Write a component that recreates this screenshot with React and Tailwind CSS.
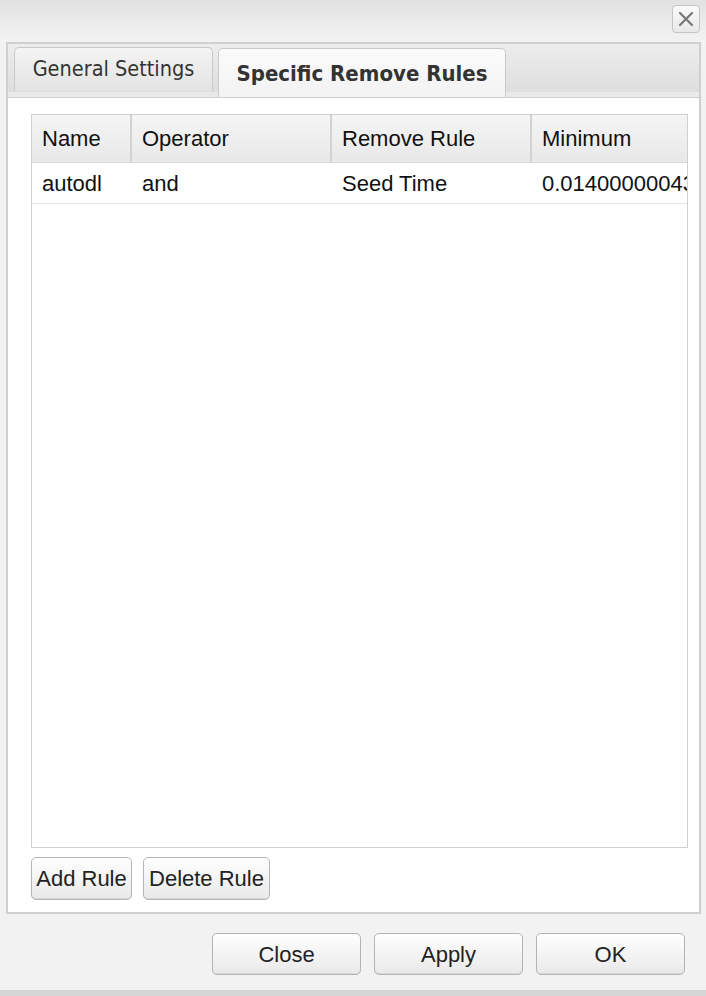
import React from "react";

const tabFont = { fontFamily: '"DejaVu Sans Condensed", "DejaVu Sans", sans-serif' };

function Btn({ children, className = "" }) {
  return (
    <div
      className={
        "flex items-center justify-center rounded-[5px] border border-[#b4b4b4] bg-gradient-to-b from-[#ffffff] to-[#e9e9e9] text-[#222] shadow-[inset_0_-1px_0_#d6d6d6] " +
        className
      }
    >
      {children}
    </div>
  );
}

export default function App() {
  const cols = [
    { label: "Name", w: "w-[98px]", v: "autodl" },
    { label: "Operator", w: "w-[200px]", v: "and" },
    { label: "Remove Rule", w: "w-[200px]", v: "Seed Time" },
    { label: "Minimum", w: "w-[200px]", v: "0.01400000043" },
  ];
  return (
    <div
      className="w-[706px] h-[996px] bg-[#f2f2f2] flex flex-col overflow-hidden"
      style={{ fontFamily: '"Liberation Sans", Arial, sans-serif' }}
    >
      {/* title bar */}
      <div className="h-[42px] shrink-0 bg-gradient-to-b from-[#e2e2e2] to-[#f3f3f3] flex justify-end items-start pt-[5px] pr-[6px]">
        <div className="w-[28px] h-[28px] rounded-[4px] border border-[#c4c4c4] bg-gradient-to-b from-[#fbfbfb] to-[#e8e8e8] flex items-center justify-center">
          <svg width="18" height="18" viewBox="0 0 18 18">
            <path d="M3 3 L15 15 M15 3 L3 15" stroke="#777" strokeWidth="2.2" strokeLinecap="round" />
          </svg>
        </div>
      </div>

      {/* panel */}
      <div className="ml-[6px] w-[695px] h-[872px] shrink-0 border-2 border-[#cfcfcf] flex flex-col bg-white">
        <div className="h-[53px] shrink-0 bg-gradient-to-b from-[#ededed] to-[#dedede] flex items-end pl-[6px] gap-[5px] border-b-[5px] border-[#e9e9e9] relative">
          <div
            className="w-[199px] h-[44px] rounded-t-[5px] border border-b-0 border-[#c9c9c9] bg-gradient-to-b from-[#f4f4f4] to-[#e3e3e3] flex items-center justify-center text-[21.5px] text-[#333] mb-[1px]"
            style={tabFont}
          >
            General Settings
          </div>
          <div
            className="w-[288px] h-[49px] rounded-t-[5px] border border-b-0 border-[#c9c9c9] bg-gradient-to-b from-[#fbfbfb] to-[#f2f2f2] flex items-center justify-center text-[22px] font-bold text-[#333] -mb-[5px] relative z-10"
            style={tabFont}
          >
            Specific Remove Rules
          </div>
        </div>
        <div className="flex-1 border-t border-[#cfcfcf] bg-white pl-[23px] pr-[11px] pt-[16px] pb-[12px] flex flex-col">
          <div className="flex-1 border border-[#d0d0d0] overflow-hidden flex flex-col">
            <div className="flex h-[48px] bg-gradient-to-b from-[#f5f5f5] to-[#e8e8e8] border-b border-[#d9d9d9] shrink-0">
              {cols.map((c, i) => (
                <div
                  key={c.label}
                  className={c.w + " shrink-0 flex items-center pl-[10px] text-[22px] text-[#111] " + (i > 0 ? "border-l-2 border-[#d2d2d2]" : "")}
                >
                  {c.label}
                </div>
              ))}
            </div>
            <div className="flex h-[41px] border-b border-[#e8e8e8] shrink-0">
              {cols.map((c, i) => (
                <div
                  key={c.label}
                  className={c.w + " shrink-0 flex items-center pl-[10px] text-[22px] text-[#111] whitespace-nowrap overflow-hidden " + (i > 0 ? "border-l-2 border-transparent" : "")}
                >
                  {c.v}
                </div>
              ))}
            </div>
          </div>
          <div className="flex gap-[11px] mt-[9px]">
            <Btn className="w-[101px] h-[43px] text-[22px]">Add Rule</Btn>
            <Btn className="w-[127px] h-[43px] text-[22px]">Delete Rule</Btn>
          </div>
        </div>
      </div>

      {/* footer */}
      <div className="flex-1 flex justify-end items-start pt-[19px] pr-[21px] gap-[13px] border-b-[6px] border-[#d6d6d6]">
        <Btn className="w-[149px] h-[42px] text-[22px]">Close</Btn>
        <Btn className="w-[149px] h-[42px] text-[22px]">Apply</Btn>
        <Btn className="w-[149px] h-[42px] text-[22px]">OK</Btn>
      </div>
    </div>
  );
}
